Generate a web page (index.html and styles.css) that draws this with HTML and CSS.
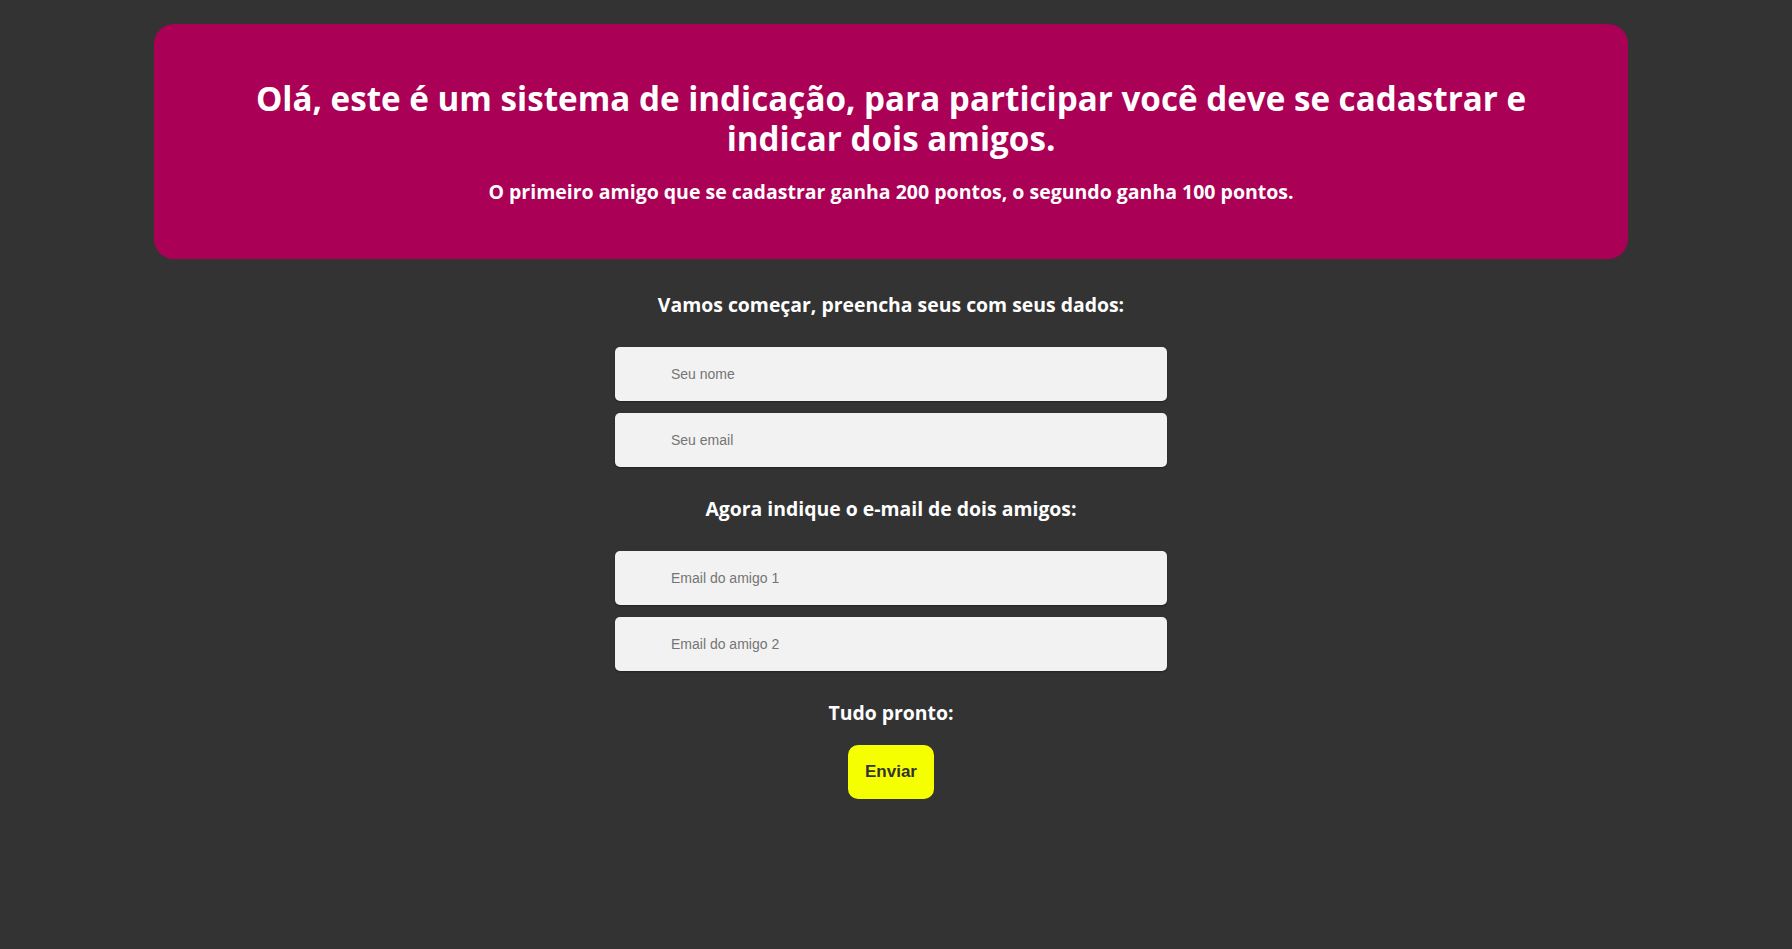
FILE: index.html
```html
<!DOCTYPE html>
<html lang="pt-BR">
<head>
<meta charset="utf-8">
<title>Sistema de indicação</title>
<link rel="stylesheet" href="styles.css">
</head>
<body>
<div class="page">
  <header class="hero">
    <h1 class="hero-title">Olá, este é um sistema de indicação, para participar você deve se cadastrar e indicar dois amigos.</h1>
    <p class="hero-sub">O primeiro amigo que se cadastrar ganha 200 pontos, o segundo ganha 100 pontos.</p>
  </header>
  <form class="form">
    <h2 class="section-title">Vamos começar, preencha seus com seus dados:</h2>
    <div class="fields">
      <input class="field" type="text" placeholder="Seu nome">
      <input class="field" type="email" placeholder="Seu email">
    </div>
    <h2 class="section-title">Agora indique o e-mail de dois amigos:</h2>
    <div class="fields">
      <input class="field" type="email" placeholder="Email do amigo 1">
      <input class="field" type="email" placeholder="Email do amigo 2">
    </div>
    <h2 class="section-title section-title-last">Tudo pronto:</h2>
    <button class="submit" type="button">Enviar</button>
  </form>
</div>
</body>
</html>
```
FILE: styles.css
```css
html, body {
  margin: 0;
  background: #333333;
}
body {
  min-height: 949px;
  font-family: "Open Sans", "Noto Sans", sans-serif;
  color: #ffffff;
}
.page {
  padding: 24px 164px 0 154px;
}
.hero {
  background: #aa0055;
  border-radius: 20px;
  padding: 55px 40px 55px;
  text-align: center;
}
.hero-title {
  margin: 0;
  font-size: 33.2px;
  line-height: 40px;
  font-weight: 700;
  padding: 0 60px;
}
.hero-sub {
  margin: 21px 0 0;
  font-size: 19.5px;
  line-height: 24px;
  font-weight: 700;
}
.form {
  display: flex;
  flex-direction: column;
  align-items: center;
  padding-top: 34px;
}
.section-title {
  margin: 0 0 30px;
  font-size: 19.4px;
  line-height: 24px;
  font-weight: 700;
  text-align: center;
}
.section-title-last {
  margin-bottom: 20px;
}
.fields {
  display: flex;
  flex-direction: column;
  gap: 12px;
  width: 552px;
  margin-bottom: 30px;
}
.field {
  box-sizing: border-box;
  width: 100%;
  height: 54px;
  border: none;
  border-radius: 5px;
  background: #f2f2f2;
  box-shadow: 0 1px 2px rgba(0, 0, 0, 0.35);
  padding: 0 20px 0 56px;
  font-family: "Liberation Sans", Arial, sans-serif;
  font-size: 14px;
  color: #333;
  outline: none;
}
.field::placeholder {
  color: #757575;
  opacity: 1;
}
.submit {
  box-sizing: border-box;
  height: 54px;
  padding: 0 17px;
  border: none;
  border-radius: 10px;
  background: #f6ff00;
  color: #333333;
  font-family: "Liberation Sans", Arial, sans-serif;
  font-size: 17px;
  font-weight: 700;
  cursor: pointer;
}
```
